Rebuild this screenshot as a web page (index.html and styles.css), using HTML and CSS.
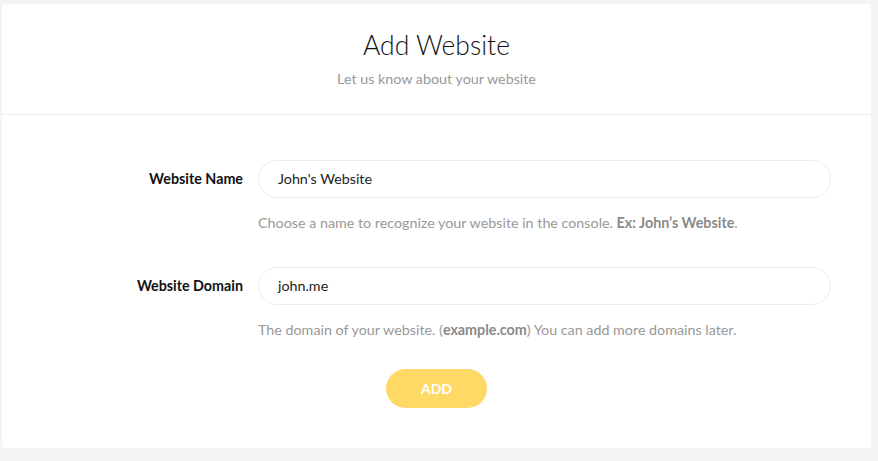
FILE: index.html
```html
<!DOCTYPE html>
<html>
<head>
<meta charset="utf-8">
<link rel="stylesheet" href="styles.css">
</head>
<body>
<div class="card">
  <div class="head">
    <h1 class="title">Add Website</h1>
    <p class="subtitle">Let us know about your website</p>
  </div>
  <form class="form">
    <label class="label">Website Name</label>
    <div class="field">
      <div class="input">John's Website</div>
      <p class="help">Choose a name to recognize your website in the console. <b>Ex: John’s Website</b>.</p>
    </div>
    <label class="label">Website Domain</label>
    <div class="field">
      <div class="input">john.me</div>
      <p class="help">The domain of your website. (<b>example.com</b>) You can add more domains later.</p>
    </div>
    <div class="actions">
      <button type="button" class="btn">ADD</button>
    </div>
  </form>
</div>
</body>
</html>
```
FILE: styles.css
```css
html, body { margin: 0; padding: 0; }
body {
  background: #f4f4f4;
  font-family: Lato, "Open Sans", sans-serif;
  width: 878px;
  height: 461px;
  overflow: hidden;
}
.card {
  margin: 4px 7px 0 2px;
  height: 444px;
  box-sizing: border-box;
  background: #fff;
  border-radius: 4px;
}
.head {
  height: 111px;
  border-bottom: 1px solid #ececec;
  text-align: center;
  padding-top: 26px;
  box-sizing: border-box;
}
.title {
  margin: 0;
  font-size: 26.5px;
  font-weight: 300;
  color: #111;
  line-height: 30px;
}
.subtitle {
  margin: 11px 0 0;
  font-size: 14.3px;
  color: #999;
  line-height: 16px;
}
.form {
  display: grid;
  grid-template-columns: 256px 1fr;
  padding: 45px 40px 0 0;
}
.label {
  text-align: right;
  padding-right: 15px;
  font-size: 14.3px;
  font-weight: 700;
  color: #111;
  line-height: 38px;
}
.field { margin-bottom: 36px; }
.field:nth-of-type(2) { margin-bottom: 31px; }
.input {
  height: 38px;
  box-sizing: border-box;
  border: 1px solid #ececec;
  border-radius: 19px;
  padding: 0 19px;
  font-size: 14.3px;
  line-height: 36px;
  color: #222;
}
.help {
  margin: 17px 0 0;
  font-size: 14.3px;
  line-height: 16px;
  color: #999;
}
.help b { color: #8a8a8a; }
.actions {
  grid-column: 1 / -1;
  padding-left: 40px;
  display: flex;
  justify-content: center;
}
.btn {
  width: 101px;
  height: 39px;
  border: none;
  border-radius: 20px;
  background: #fed966;
  color: #fff;
  font-family: Lato, "Open Sans", sans-serif;
  font-weight: 700;
  font-size: 14px;
}
```
